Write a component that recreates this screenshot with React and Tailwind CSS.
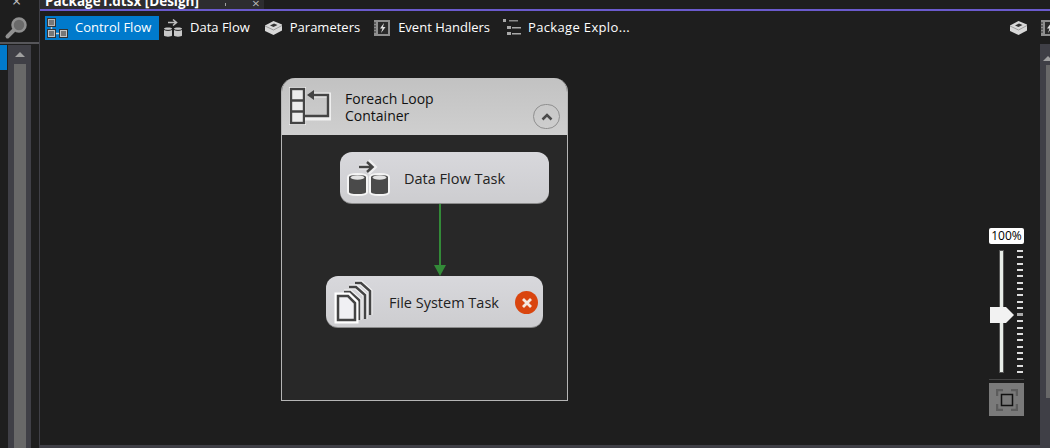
import React from 'react';

const font = 'font-["Open_Sans","Noto_Sans",sans-serif]';

const ControlFlowIcon = () => (
  <svg width="22" height="22" viewBox="0 0 22 22" fill="none">
    <rect x="1" y="1" width="9" height="9" fill="#333" />
    <rect x="2.500" y="2.500" width="6" height="6" fill="#777" stroke="#b8b8b8" />
    <path d="M5.500 10v3" stroke="#c4c4c4" strokeWidth="1.500" />
    <rect x="1" y="12" width="9" height="9" fill="#333" />
    <rect x="2.500" y="13.500" width="6" height="6" fill="#777" stroke="#c4c4c4" />
    <path d="M10 16.500h4" stroke="#d4d4d4" strokeWidth="1.500" />
    <rect x="13" y="12" width="9" height="9" fill="#333" />
    <rect x="14.500" y="13.500" width="6" height="6" fill="#777" stroke="#c4c4c4" />
  </svg>
);

const DataFlowIcon = () => (
  <svg width="20" height="20" viewBox="0 0 20 20" fill="none">
    <path d="M5 4.500h8M10 1.500l3.500 3-3.500 3" stroke="#bdbdbd" strokeWidth="1.600" />
    <path d="M1 10.500c0-1.500 8-1.500 8 0v7c0 1.500-8 1.500-8 0z" fill="#c8c8c8" />
    <path d="M11 10.500c0-1.500 8-1.500 8 0v7c0 1.500-8 1.500-8 0z" fill="#c8c8c8" />
    <path d="M1 11.500c1.500 1.200 6.500 1.200 8 0M11 11.500c1.500 1.200 6.500 1.200 8 0" stroke="#1e1e1e" strokeWidth="1" />
  </svg>
);

const NodeDataIcon = () => (
  <svg width="44" height="38" viewBox="0 0 44 38" fill="none">
    <path d="M13 8h14M22 2l6 6-6 6" stroke="#fff" strokeWidth="5" opacity="0.6" />
    <path d="M13 8h13M21 3l5.500 5-5.500 5" stroke="#444" strokeWidth="2.500" />
    <path d="M2 18c0-4 19-4 19 0v15c0 4-19 4-19 0z" fill="#4a4a4a" stroke="#f4f4f4" strokeWidth="2" />
    <path d="M24 18c0-4 19-4 19 0v15c0 4-19 4-19 0z" fill="#4a4a4a" stroke="#f4f4f4" strokeWidth="2" />
    <ellipse cx="11.500" cy="18.500" rx="7" ry="2.200" fill="#e4e4e4" />
    <ellipse cx="33.500" cy="18.500" rx="7" ry="2.200" fill="#e4e4e4" />
  </svg>
);

const BoxIcon = () => (
  <svg width="19" height="16" viewBox="0 0 19 16">
    <path d="M1 5.500 9.500 1l8.500 3.500v6L9.500 15 1 11z" fill="#d8d8d8" />
    <path d="M6 5.500 10 3.500l3.500 1.500-4 2z" fill="#333" />
    <path d="M1 6l8.500 4 8.500-4.500" stroke="#9a9a9a" fill="none" />
  </svg>
);

const EventIcon = () => (
  <svg width="18" height="18" viewBox="0 0 18 18">
    <rect x="1" y="1" width="16" height="16" fill="#8f8f8f" />
    <rect x="5" y="3" width="10" height="12" fill="#2a2a2a" />
    <path d="M11 4 7 9.500h2.500L8 14l4.500-6H10z" fill="#e0e0e0" />
    <path d="M0 4h3M0 7h3M0 10h3M0 13h3" stroke="#2a2a2a" />
  </svg>
);

const ExplorerIcon = () => (
  <svg width="20" height="20" viewBox="0 0 20 20" fill="#a8a8a8">
    <rect x="1" y="1" width="3" height="3" />
    <rect x="7" y="2" width="9" height="1.500" fill="#8a8a8a" />
    <rect x="5" y="8" width="4" height="3" />
    <rect x="10" y="9" width="9" height="1.500" />
    <rect x="5" y="14" width="4" height="3" />
    <rect x="10" y="15" width="9" height="1.500" />
  </svg>
);

const LoopIcon = () => (
  <svg width="42" height="40" viewBox="0 0 42 40" fill="none">
    <rect x="0" y="0" width="17" height="38" fill="#fff" opacity="0.8" />
    <rect x="2" y="2" width="13" height="34" fill="#ececec" stroke="#444" strokeWidth="2.400" />
    <path d="M2 13.500h13M2 24.500h13" stroke="#444" strokeWidth="2.400" />
    <path d="M24 8h17v23H16" stroke="#fff" strokeWidth="5" opacity="0.7" />
    <path d="M24 8h15v21H16" stroke="#444" strokeWidth="2.400" />
    <path d="M18 8l7-5v10z" fill="#444" />
  </svg>
);

const FilesIcon = () => (
  <svg width="40" height="44" viewBox="0 0 40 44" fill="none">
    <path d="M21 3h6l9 8v24" stroke="#fff" strokeWidth="5" opacity="0.7" />
    <path d="M21 3h6l9 8v24" stroke="#444" strokeWidth="2.500" />
    <path d="M15 7h7l9 8v24" stroke="#fff" strokeWidth="5" opacity="0.7" />
    <path d="M15 7h7l9 8v24" stroke="#444" strokeWidth="2.500" />
    <path d="M10 12h6l9 8v20" stroke="#fff" strokeWidth="5" opacity="0.7" />
    <path d="M10 12h6l9 8v20" stroke="#444" strokeWidth="2.500" />
    <path d="M2 14h13l8 8v20H2z" fill="#f0f0f3" stroke="#fff" strokeWidth="3" />
    <path d="M4 16h10l7 7v17H4z" fill="#f0f0f3" stroke="#444" strokeWidth="2.500" />
  </svg>
);

const FitIcon = () => (
  <svg width="22" height="22" viewBox="0 0 22 22" fill="none">
    <path d="M1 7V1h6M15 1h6v6M21 15v6h-6M7 21H1v-6" stroke="#5c5c5c" strokeWidth="2.500" />
    <rect x="5.500" y="5.500" width="11" height="11" stroke="#111" strokeWidth="1.500" />
  </svg>
);

const tabs = [
  { label: 'Data Flow', icon: <DataFlowIcon />, cls: 'ml-[4px] gap-[7px]' },
  { label: 'Parameters', icon: <BoxIcon />, cls: 'ml-[14px] gap-[7px]' },
  { label: 'Event Handlers', icon: <EventIcon />, cls: 'ml-[13px] gap-[7px]' },
  { label: 'Package Explo...', icon: <ExplorerIcon />, cls: 'ml-[12px] gap-[6px] tracking-[0.35px]' },
];

const ticks = Array.from({ length: 20 }, (_, i) => i);

const Node = ({ icon, label, cls, labelCls }) => (
  <div className={`absolute h-[52px] rounded-[12px] bg-gradient-to-b from-[#d8d8dc] to-[#cdcdd0] border-b border-[#8a8a8a] flex items-center text-[14.5px] text-[#222] ${cls}`}>
    {icon}
    <span className={labelCls}>{label}</span>
  </div>
);

export default function App() {
  return (
    <div className={`w-[1050px] h-[448px] overflow-hidden flex bg-[#1e1e1e] ${font}`}>
      {/* left rail */}
      <div className="w-[40px] shrink-0 flex flex-col border-r border-[#3f3f46]">
        <div className="h-[44px] shrink-0 border-b-[2px] border-[#56565a] flex flex-col items-center">
          <span className="h-[8px] text-[#c0c0c0] text-[16px] leading-[2px] ml-[-6px]">×</span>
          <svg className="mt-[8px] ml-[-7px]" width="24" height="24" viewBox="0 0 24 24" fill="none">
            <circle cx="15" cy="9" r="6.500" stroke="#909090" strokeWidth="2.500" fill="#6a6a6a" />
            <path d="M9.500 14.500l-6 6" stroke="#909090" strokeWidth="4" strokeLinecap="round" />
          </svg>
        </div>
        <div className="flex-1 flex mt-[1px]">
          <div className="w-[7px] h-[25px] bg-[#007acc]" />
          <div className="ml-[1px] w-[23px] bg-[#3f3f46] flex flex-col items-center">
            <div className="mt-[7px] w-0 h-0 border-x-[5px] border-x-transparent border-b-[5px] border-b-[#a0a0a0]" />
            <div className="mt-[7px] w-[12px] flex-1 bg-[#686868]" />
          </div>
        </div>
      </div>

      <div className="flex-1 flex flex-col min-w-0">
        {/* document tab */}
        <div className="h-[9px] shrink-0 overflow-hidden">
          <div className="w-[224px] h-[9px] bg-[#2d2d30] flex items-end pl-[5px] text-[13.500px] leading-[16px] font-bold text-white">
            <span className="whitespace-nowrap">Package1.dtsx [Design]</span>
            <span className="ml-[26px] mb-[3px] w-px h-[3px] bg-[#a0a0a0]" />
            <span className="ml-[26px] mb-[-2px] text-[#c0c0c0] font-normal">×</span>
          </div>
        </div>
        <div className="h-[2px] shrink-0 bg-[#6a5acd]" />

        {/* designer tabs */}
        <div className="h-[33px] shrink-0 flex items-center pl-[5px] text-[13px] text-white">
          <div className="h-[24px] w-[114px] bg-[#007acc] flex items-center gap-[7px] pl-[1px]">
            <ControlFlowIcon />
            <span>Control Flow</span>
          </div>
          {tabs.map((t) => (
            <div key={t.label} className={`flex items-center ${t.cls}`}>
              {t.icon}
              <span>{t.label}</span>
            </div>
          ))}
          <div className="ml-auto flex items-center gap-[12px]">
            <BoxIcon />
            <div className="w-[10px] overflow-hidden"><EventIcon /></div>
          </div>
        </div>

        <div className="flex-1 flex min-h-0">
          {/* design surface */}
          <div className="relative flex-1">
            <div className="absolute left-[241px] top-[34px] w-[287px] h-[323px] rounded-t-[14px] border border-[#b5b5b5] border-t-0 bg-[#282828] overflow-hidden">
              <div className="h-[57px] bg-gradient-to-b from-[#c2c2c2] to-[#cfcfcf] flex text-[14px] leading-[17px] text-[#111]">
                <div className="ml-[7px] mt-[9px]"><LoopIcon /></div>
                <div className="ml-[14px] mt-[12px] w-[110px]">Foreach Loop Container</div>
                <div className="ml-[78px] mt-[26px] w-[27px] h-[25px] rounded-full border border-[#8f8f8f] flex items-center justify-center">
                  <svg width="12" height="8" viewBox="0 0 12 8" fill="none">
                    <path d="M1.500 6.500 6 2l4.500 4.500" stroke="#4a4a4a" strokeWidth="2.500" />
                  </svg>
                </div>
              </div>
            </div>

            <Node
              cls="left-[300px] top-[108px] w-[209px]"
              labelCls="ml-[14px] mt-[2px]"
              icon={<div className="ml-[6px]"><NodeDataIcon /></div>}
              label="Data Flow Task"
            />

            {/* precedence constraint */}
            <svg className="absolute left-[393px] top-[160px]" width="14" height="73" viewBox="0 0 14 73">
              <path d="M7 0v62" stroke="#338a38" strokeWidth="2" />
              <path d="M1 61h12l-6 11z" fill="#338a38" />
            </svg>

            <Node
              cls="left-[286px] top-[232px] w-[217px]"
              labelCls="ml-[15px] mt-[2px]"
              icon={<div className="ml-[8px]"><FilesIcon /></div>}
              label="File System Task"
            />
            <div className="absolute left-[475px] top-[247px] w-[23px] h-[23px] rounded-full bg-[#d9450f] flex items-center justify-center">
              <svg width="12" height="12" viewBox="0 0 12 12">
                <path d="M2 2l8 8M10 2l-8 8" stroke="#f5e8df" strokeWidth="2.800" />
              </svg>
            </div>

            {/* zoom slider */}
            <div className="absolute left-[949px] top-[184px] w-[35px] flex flex-col items-center">
              <div className="w-[35px] h-[16px] rounded-[2px] bg-white text-[12px] leading-[16px] text-center text-black">100%</div>
              <div className="relative w-full h-[123px] mt-[6px]">
                <div className="absolute left-[10px] top-0 w-[5px] h-full bg-[#e8ede8] border border-[#555]" />
                <div className="absolute left-[28px] top-0 h-full w-[6px] flex flex-col justify-between">
                  {ticks.map((i) => (
                    <div key={i} className={i === 10 ? 'h-[3px] bg-[#aaa]' : 'h-[2px] bg-[#ddd]'} />
                  ))}
                </div>
                <svg className="absolute left-[1px] top-[57px]" width="25" height="16" viewBox="0 0 25 16">
                  <path d="M0 0h16l8 8-8 8H0z" fill="#f2f2f2" />
                </svg>
              </div>
              <div className="w-full h-px bg-[#444] mt-[6px]" />
              <div className="w-full h-[33px] mt-[3px] bg-[#7a7a7a] flex items-center justify-center">
                <FitIcon />
              </div>
            </div>
          </div>

          {/* right scrollbar */}
          <div className="w-[10px] shrink-0 bg-[#3f3f46] flex flex-col items-end">
            <div className="mt-[12px] mr-[-3px] w-0 h-0 border-x-[5px] border-x-transparent border-b-[5px] border-b-[#a0a0a0]" />
            <div className="mt-[4px] w-[4px] h-[333px] bg-[#686868]" />
          </div>
        </div>

        {/* bottom scrollbar */}
        <div className="h-[3px] shrink-0 bg-[#3f3f46]" />
      </div>
    </div>
  );
}
